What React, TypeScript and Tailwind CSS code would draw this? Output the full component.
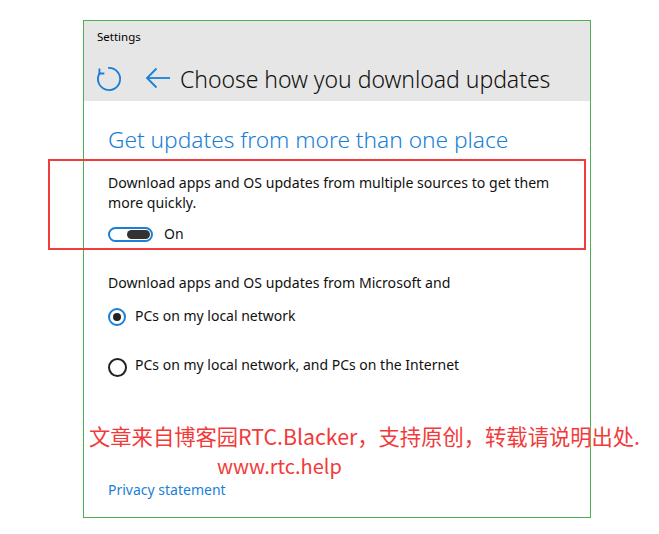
import React from "react";

function RefreshIcon() {
  return (
    <svg width="28" height="28" viewBox="0 0 24 24" fill="none" stroke="#1a7fd6" strokeWidth="1.6" strokeLinecap="square">
      <path d="M12 2.5 A9.5 9.5 0 1 1 3.8 7.25" />
      <polyline points="3.8,3 3.8,7.25 8,7.25" strokeLinecap="butt" />
    </svg>
  );
}

function BackArrow() {
  return (
    <svg width="26" height="22" viewBox="0 0 26 22" fill="none" stroke="#1a7fd6" strokeWidth="1.8">
      <path d="M2 11 H25" />
      <path d="M11.5 1.5 L2 11 L11.5 20.5" />
    </svg>
  );
}

export default function App() {
  const font = { fontFamily: '"Noto Sans", "Open Sans", sans-serif' };
  return (
    <div className="relative w-[659px] h-[534px] bg-white overflow-hidden" style={font}>
      <div className="ml-[83px] mt-[20px] w-[508px] h-[498px] border border-[#4caf50] flex flex-col">
        <div className="bg-[#e6e6e6] h-[80px] flex flex-col">
          <div className="pl-[13px] pt-[8px] text-[11.5px] text-black leading-[16px]">Settings</div>
          <div className="flex items-center pl-[11px] mt-[19px] h-[30px]">
            <RefreshIcon />
            <div className="ml-[22px] mt-[-2px]"><BackArrow /></div>
            <div className="ml-[9px] text-[23px] font-light text-[#111] leading-[30px] tracking-[-0.05px]">Choose how you download updates</div>
          </div>
        </div>
        <div className="pl-[24px] flex flex-col">
          <div className="mt-[24px] text-[22.7px] text-[#1a7fd6] leading-[30px] font-light">Get updates from more than one place</div>
          <div className="mt-[18px] text-[14.1px] leading-[20px] text-[#111] w-[460px]">
            Download apps and OS updates from multiple sources to get them more quickly.
          </div>
          <div className="mt-[11px] flex items-center">
            <div className="w-[45px] h-[15px] rounded-full border-2 border-[#1a7fd6] flex items-center justify-end pr-[1px]">
              <div className="w-[23px] h-[9px] rounded-full bg-[#333]" />
            </div>
            <span className="ml-[11px] text-[14px] leading-[20px] text-[#111]">On</span>
          </div>
          <div className="mt-[29px] text-[14.1px] leading-[20px] text-[#111]">Download apps and OS updates from Microsoft and</div>
          <div className="mt-[13px] flex items-start">
            <div className="mt-[2px] w-[18px] h-[18px] rounded-full border-2 border-[#1a7fd6] flex items-center justify-center">
              <div className="w-[8px] h-[8px] rounded-full bg-[#222]" />
            </div>
            <span className="ml-[9px] text-[14px] leading-[20px] text-[#111]">PCs on my local network</span>
          </div>
          <div className="mt-[29px] flex items-start">
            <div className="mt-[3px] w-[19px] h-[19px] rounded-full border-2 border-[#222]" />
            <span className="ml-[8px] text-[14px] leading-[20px] text-[#111]">PCs on my local network, and PCs on the Internet</span>
          </div>
          <div className="mt-[103px] text-[14px] leading-[20px] text-[#1a7fd6]">Privacy statement</div>
        </div>
      </div>

      <div className="absolute left-[48px] top-[159px] w-[538px] h-[91px] border-2 border-[#f23c3c]" />

      <div
        className="absolute left-[89px] top-[421px] text-[21.3px] leading-[30px] text-[#f23a3a] whitespace-nowrap"
        style={{ fontFamily: '"Noto Sans CJK SC", "Noto Sans", sans-serif' }}
      >
        文章来自博客园RTC.Blacker，支持原创，转载请说明出处.
      </div>
      <div
        className="absolute left-[217px] top-[451px] text-[20px] leading-[30px] text-[#f23a3a] whitespace-nowrap"
        style={{ fontFamily: '"Noto Sans CJK SC", "Noto Sans", sans-serif' }}
      >
        www.rtc.help
      </div>
    </div>
  );
}
